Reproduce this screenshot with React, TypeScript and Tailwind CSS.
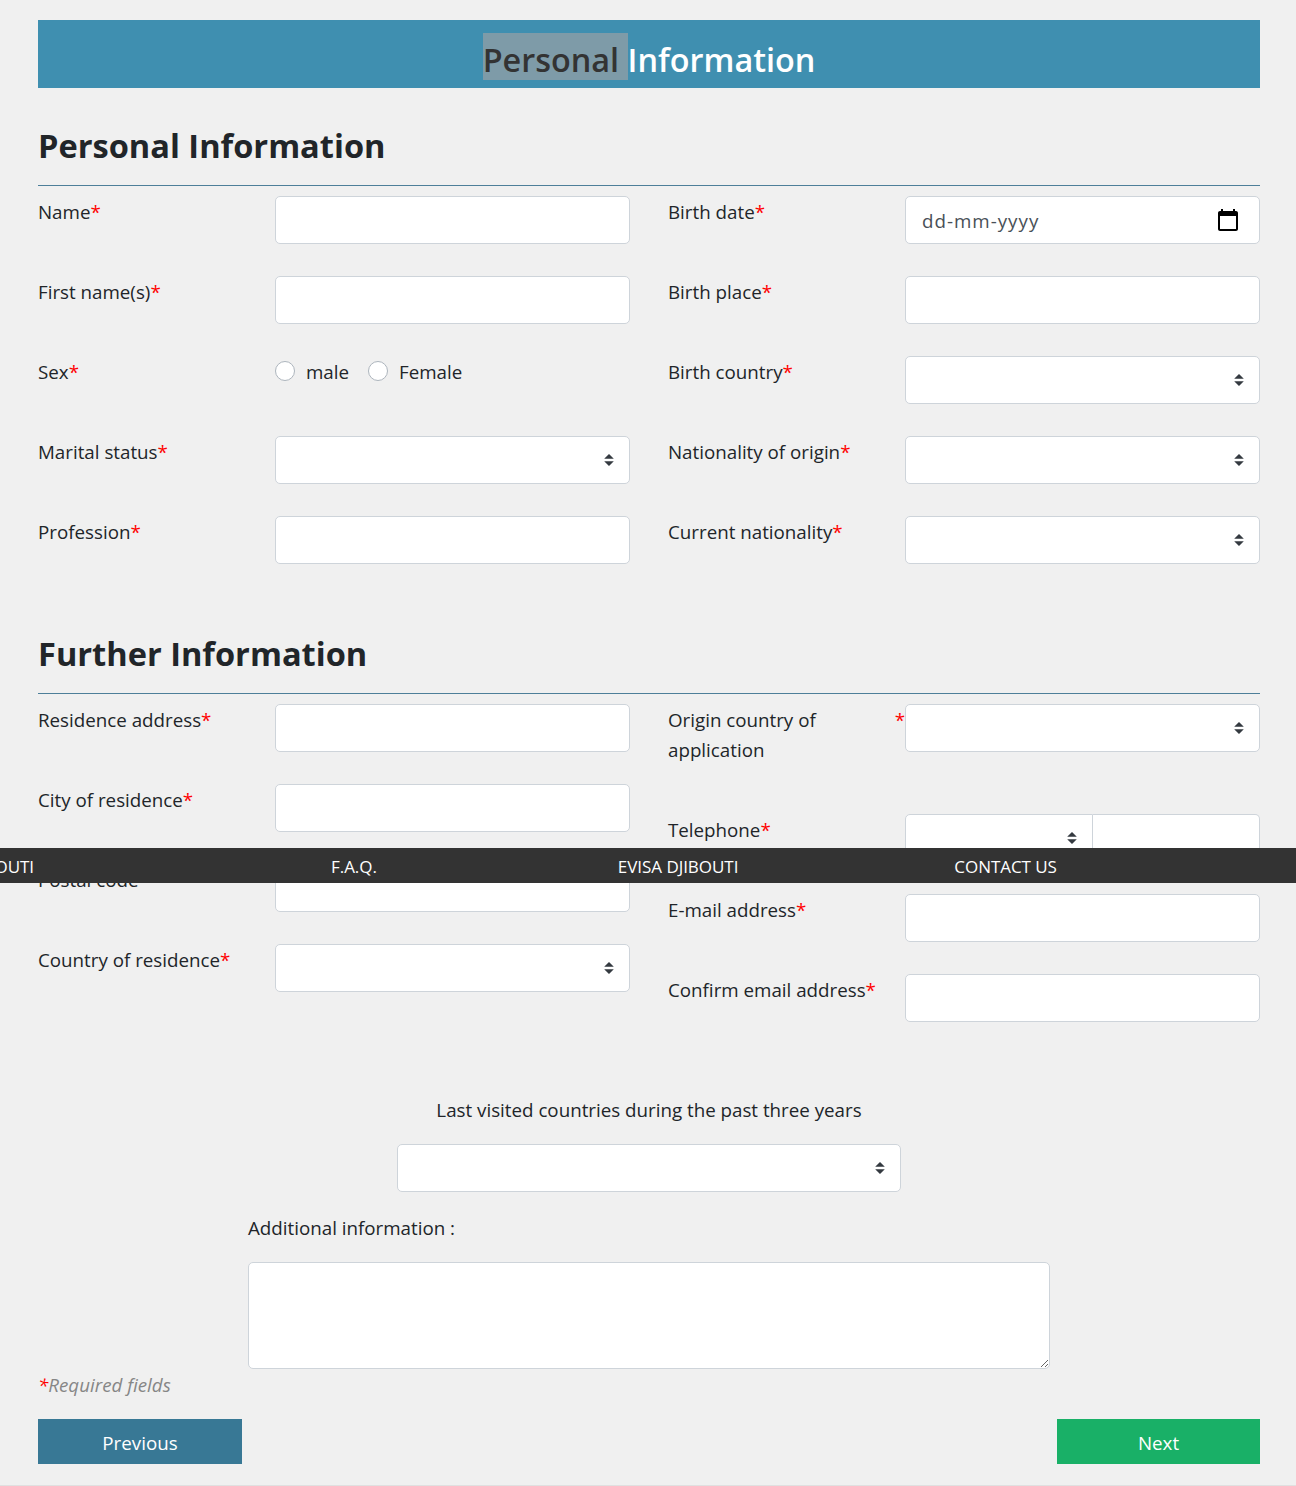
import React from 'react';

const inputCls = 'w-full h-12 bg-white border border-[#ced4da] rounded-[5px] outline-none px-4 text-[18.75px] text-[#495057] appearance-none';

const Req = () => <span className="text-[#ff0000]">*</span>;

const Arrows = ({ className }: { className: string }) => (
  <svg viewBox="0 0 4 5" className={`absolute w-[10px] h-[12px] fill-[#343a40] pointer-events-none ${className}`}>
    <path d="M2 0L0 2h4zm0 5L0 3h4z" />
  </svg>
);

const TextBox = () => <input type="text" className={inputCls} />;

const SelectBox = () => (
  <div className="relative w-full">
    <select className={inputCls}></select>
    <Arrows className="right-4 top-[18px]" />
  </div>
);

const Field = ({ label, req = true, children }: { label: string; req?: boolean; children: React.ReactNode }) => (
  <div className="flex h-12">
    <label className="w-[237px] shrink-0 leading-[30px] pt-px">
      {label}
      {req && <Req />}
    </label>
    <div className="flex-1">{children}</div>
  </div>
);

const Radio = ({ label }: { label: string }) => (
  <label className="flex items-start gap-[11px] leading-[30px] pt-px">
    <input type="radio" name="sex" className="appearance-none w-5 h-5 mt-[4px] rounded-full bg-white border border-[#adb5bd]" />
    {label}
  </label>
);

const Heading = ({ children }: { children: React.ReactNode }) => (
  <>
    <h2 className="text-[32.6px] font-bold leading-[44px] text-[#212529]">{children}</h2>
    <hr className="border-0 border-t border-[#4d7f99] mt-[17px] mb-[10px]" />
  </>
);

export default function App() {
  return (
    <div className="relative min-h-[1486px] bg-[#f0f0f0] text-[#212529] text-[18.75px] border-b border-[#e0e0e0]" style={{ fontFamily: '"Open Sans", "Noto Sans", sans-serif' }}>
      <div className="pl-[38px] pr-[36px] pt-5">
        {/* Banner */}
        <div className="h-[68px] bg-[#3f8fb0] pt-[13px]">
          <h1 className="flex justify-center h-[47px] text-[32.4px] font-semibold leading-[52px] text-white">
            <span className="h-[47px] bg-[#7e9ba8] text-[#333333] whitespace-pre">Personal </span>
            <span className="h-[47px]">Information</span>
          </h1>
        </div>

        <div className="mt-[36px]">
          <Heading>Personal Information</Heading>
          <div className="grid grid-cols-2 gap-x-[38px] gap-y-8">
            <Field label="Name"><TextBox /></Field>
            <Field label="Birth date">
              <div className="relative">
                <input type="text" placeholder="dd-mm-yyyy" className={`${inputCls} tracking-[1px] placeholder:text-[#495057]`} />
                <svg viewBox="0 0 24 24" className="absolute right-[20px] top-[12px] w-6 h-6">
                  <path d="M20 3h-1V1h-2v2H7V1H5v2H4c-1.1 0-2 .9-2 2v16c0 1.1.9 2 2 2h16c1.1 0 2-.9 2-2V5c0-1.1-.9-2-2-2zm0 18H4V8h16v13z" />
                </svg>
              </div>
            </Field>
            <Field label="First name(s)"><TextBox /></Field>
            <Field label="Birth place"><TextBox /></Field>
            <Field label="Sex">
              <div className="flex gap-[19px]">
                <Radio label="male" />
                <Radio label="Female" />
              </div>
            </Field>
            <Field label="Birth country"><SelectBox /></Field>
            <Field label="Marital status"><SelectBox /></Field>
            <Field label="Nationality of origin"><SelectBox /></Field>
            <Field label="Profession"><TextBox /></Field>
            <Field label="Current nationality"><SelectBox /></Field>
          </div>
        </div>

        <div className="mt-[68px]">
          <Heading>Further Information</Heading>
          <div className="grid grid-cols-2 gap-x-[38px]">
            <div className="flex flex-col gap-8">
              <Field label="Residence address"><TextBox /></Field>
              <Field label="City of residence"><TextBox /></Field>
              <Field label="Postal code" req={false}><TextBox /></Field>
              <Field label="Country of residence"><SelectBox /></Field>
            </div>
            <div className="flex flex-col gap-8">
              <div className="flex h-[78px]">
                <label className="w-[237px] shrink-0 flex justify-between leading-[30px] pt-px">
                  <span className="w-[180px]">Origin country of application</span>
                  <Req />
                </label>
                <div className="flex-1"><SelectBox /></div>
              </div>
              <Field label="Telephone">
                <div className="flex">
                  <div className="relative w-[188px] shrink-0">
                    <select className={`${inputCls} rounded-r-none`}></select>
                    <Arrows className="right-[16px] top-[18px]" />
                  </div>
                  <input type="text" className={`${inputCls} rounded-l-none border-l-0`} />
                </div>
              </Field>
              <Field label="E-mail address"><TextBox /></Field>
              <Field label="Confirm email address"><TextBox /></Field>
            </div>
          </div>
        </div>

        {/* Visited countries */}
        <div className="mt-[73px] text-center leading-[30px]">Last visited countries during the past three years</div>
        <div className="w-[504px] mx-auto mt-[19px]">
          <SelectBox />
        </div>

        <div className="w-[802px] mx-auto mt-[21px]">
          <div className="leading-[30px]">Additional information :</div>
          <textarea className="block w-full h-[107px] mt-[19px] bg-white border border-[#ced4da] rounded-[5px] outline-none"></textarea>
        </div>

        <div className="mt-[1px] italic text-[#868686] leading-[30px]"><Req />Required fields</div>

        <div className="flex justify-between mt-[19px]">
          <button className="w-[204px] h-[45px] pt-[3px] bg-[#387895] text-white">Previous</button>
          <button className="w-[203px] h-[45px] pt-[3px] bg-[#19b067] text-white">Next</button>
        </div>
      </div>

      {/* Sticky nav lying over the form */}
      <div className="absolute left-0 right-0 top-[848px] h-[35px] bg-[#333333] text-white text-[17px] tracking-[-0.05px] leading-[37px] overflow-hidden whitespace-nowrap flex">
        <span className="w-[34px] shrink-0 flex justify-end"><span>DJIBOUTI</span></span>
        <span className="ml-[297px]">F.A.Q.</span>
        <span className="ml-[241px]">EVISA DJIBOUTI</span>
        <span className="ml-[216px]">CONTACT US</span>
      </div>
    </div>
  );
}
